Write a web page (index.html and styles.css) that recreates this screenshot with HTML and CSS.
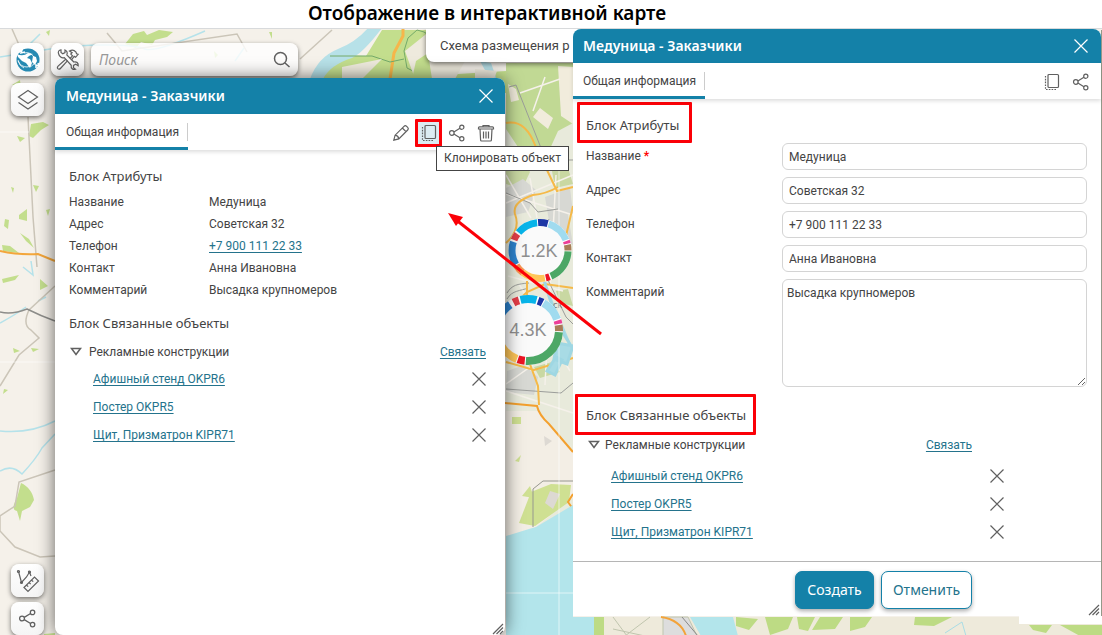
FILE: index.html
```html
<!DOCTYPE html>
<html lang="ru">
<head>
<meta charset="utf-8">
<meta name="viewport" content="width=device-width, initial-scale=1">
<title>Отображение в интерактивной карте</title>
<link rel="stylesheet" href="styles.css">
</head>
<body>
<svg class="sprite" aria-hidden="true">
  <symbol id="close" viewBox="0 0 16 16"><path d="M1.5 1.5l13 13M14.5 1.5l-13 13"/></symbol>
  <symbol id="share" viewBox="0 0 18 18"><circle cx="3.8" cy="9" r="2.3"/><circle cx="13.8" cy="3.2" r="2.1"/><circle cx="13.8" cy="14.8" r="2.1"/><path d="M5.9 7.9l6-3.6M5.9 10.1l6 3.6"/></symbol>
  <symbol id="clone" viewBox="0 0 18 18"><rect x="5" y="1.5" width="10.5" height="13" rx="1"/><path d="M2.5 3v13.5H13" stroke-dasharray="1.6 1.2"/></symbol>
  <symbol id="pencil" viewBox="0 0 18 18"><path d="M1.8 16.2l1.3-5L12 2.3c.8-.8 1.8-.8 2.6 0l1.1 1.1c.8.8.8 1.800 0 2.600l-8.900 8.900zM3.100 11.200c1.800.2 3.400 1.800 3.700 3.700M10.300 4l3.700 3.700"/></symbol>
  <symbol id="trash" viewBox="0 0 18 18"><path d="M1.500 5V3.800c0-.6.4-.9 1-.9h13c.6 0 1 .3 1 .9V5zM6 2.800V1.500h6v1.300M3 5l.6 11c0 .6.4 1 1 1h8.800c.6 0 1-.4 1-1L15 5M6.500 7.500v7M9 7.500v7M11.500 7.500v7"/></symbol>
  <symbol id="caret" viewBox="0 0 12 10"><path d="M1.500 1.500h9L6 7.500z"/></symbol>
  <symbol id="grip" viewBox="0 0 12 12"><path d="M1 11L11 1M4.500 11L11 4.500M8 11l3-3"/></symbol>
  <symbol id="layers" viewBox="0 0 24 24"><path d="M12 2.500L21.500 9 12 15.500 2.500 9zM2.500 14.500L12 21l9.500-6.500"/></symbol>
  <symbol id="search-icon" viewBox="0 0 18 18"><circle cx="7.500" cy="7.500" r="6"/><path d="M12 12l4.500 4"/></symbol>
  <symbol id="tools" viewBox="0 0 24 24"><path d="M2.500 5.500C1.800 3.500 3 2 5 1.800L5 4.500l1.800 1.300L9 4.600V2c2 .8 2.800 3 1.800 5l7 7c2.700-.8 4.700 1 4.400 3.800l-2.500-1.600-2.200 1.200v2.300l2 1.600c-2.500.8-4.800-1-4.300-4L8.300 9.600c-2.600.9-5-.9-5.800-4.100z"/><path d="M11.600 12.600L4.400 20.500c-.8.9-2 .8-2.600.1-.6-.8-.5-1.700.3-2.500L10 11M14 10.500l2.500-2.700-1.700-1.700 1.300-1.400L13.500 3c2.400-1.500 4.700-1 6.300.8l.8 2 1.500.5-2.500 3-1.400-.9-2.700 3.500"/></symbol>
  <symbol id="ruler" viewBox="0 0 24 24"><path d="M2.500 2.500l3 11 5-5.500 3-5 1.500 4"/><circle cx="2.500" cy="2.500" r="1"/><circle cx="5.500" cy="13.500" r="1"/><circle cx="13.500" cy="3" r="1"/><path d="M8 18.500L18.500 8l4 4L12 22.500zM10.500 16l1.700 1.700M13 13.500l1.700 1.700M15.500 11l1.700 1.700"/></symbol>
</svg>

<h1 class="title">Отображение в интерактивной карте</h1>

<main class="stage">
  <svg class="map" viewBox="0 28 1102 607" preserveAspectRatio="xMinYMin slice" aria-hidden="true">
    <rect y="28" width="1102" height="607" fill="#f5f1ea"/>
    <g fill="#c3de8d">
      <path d="M312 78l24-24 30 1 16-26h50l10 45 131-8v130l-60 15V92H312z"/>
      <path d="M125 43l8-10 11-3 3 4 12-5 14 2-6 5-12 3-3 5-11-3-5 6zM46 31l4-2-1 6zM269 31h3v7zM214 50l4 4-3 3z"/>
      <path d="M31 123l12-2 6 3-8 5-8 8-4-2zM17 135l8 2-5 4zM12 84l8-5 1 8zM19 214l8-6v12l-8-2zM5 218l4 1-1 9-4-3zM11 186l3 1-1 5zM33 184l6 1-3 6zM2 244l8 1 9 7-16-2zM20 232l9 6 5 9-8-7zM40 278l8 7-8 4zM2 278l17-4-4 5-12 3zM13 347l7 3-6 2zM31 347l8 1-6 3zM4 388l4 1-5 4zM46 209l4-1-2 7z"/>
      <path d="M21 482c7 3 12 10 13 17l-4 7-8 4-2 10-3-10c-6-1-3-8 0-13zM44 633l11-1v3H44z"/>
    </g>
    <g fill="none" stroke="#b5e2ea" stroke-width="1.500">
      <path d="M0 56q25-4 50-8t55-4 40 4 60-18"/><path d="M0 430q30 3 55-10M0 470q12-7 22 3Q36 458 42 447l13-14M15 68l15-25 10-10M0 322q15-8 26-16"/>
      <path d="M235 60l9-13M23 266l10 8-2-14M38 300l8-4"/>
    </g>
    <path d="M310 78q8-22 28-30 18-7 30-21h14q-19 25-30 30-22 7-29 21zM480 60l11 2 7 20-7-2z" fill="#b7e1e8"/>
    <g fill="none" stroke="#cbc5b8" stroke-width="1.500">
      <path d="M28 116l5 100 4 50M55 285L29 309q-7 15 2 20l8 8-20 17-19 31M55 469l-36 12-4 24-15 10v15l15 16 25 10 15-1M12 28l15 34M107 32l15 18 115-17 10 18M122 50l-15-18M300 58l32-29"/>
    </g>
    <path d="M0 250q18 4 38 3l17 7" stroke="#f3a63b" stroke-width="2" fill="none"/>
    <path d="M0 311q12 3 27-3 14 7 28 12" stroke="#8d8d8a" stroke-width="1.500" fill="none"/>
    <path d="M403 28v7l-9 17-4 26" stroke="#f6b64a" stroke-width="3" fill="none"/>
    <path d="M432 36l-8-5-7-2-9 8-4 13 3 17 12 6M330 55l42 0 18 6 14-3" stroke="#74aa69" stroke-width="1" fill="none"/>
    <path d="M342 66l40-8-20 20h-20zM405 50l25-20 50 3-25 45h-40zM475 68l22 2-3 8h-19z" fill="#eeeadd"/>
    <path d="M416 60l12-8 4 26h-20z" fill="#c3de8d"/>

    <path d="M506 70h67v480h-67z" fill="#e8eadb"/>
    <path d="M506 62h67v60l-15 8-14 31-18-3-20-30z" fill="#c1d994"/>
    <path d="M558 65l15 1v57l-12-8zM508 83l8 5 3 11-8 2zM540 107l13 10-5 11-15-12z" fill="#f1ecdc"/>
    <g fill="#c9d8a2"><path d="M506 157h15l9 14-8 17-16-5zM552 170l16-3 5 16-18 4zM534 366l18-5 8 10-20 6zM512 342l9 2-4 9-11-2zM556 290l12-2 5 17-13-3z"/></g>
    <g fill="#d7d8d3"><path d="M506 187l17-9 13 11-8 22-22 5zM545 196l25-9 3 25-24 8zM507 370l17-6 14 12-4 18-28-3zM548 213l20 1 5 30-16-9z"/></g>
    <g stroke="#f5f1ea" stroke-width="1.500" fill="none"><path d="M506 193l67 21M506 202l67-28M506 390l67 22M506 383l48-34M530 177l7 40M519 283l51 87M508 275l55 15M556 174l-11 210M506 174l25 43M520 92l40-14M545 76l-12 34"/></g>
    <g stroke="#9b9d9a" stroke-width="1" fill="none"><path d="M509 86l7-2 25 63 26 12h6M506 192l24 10 8 9 20-3M506 388l55 4 12-10M507 292c5-8 10-9 22-10M507 298c5-9 14-8 21-11M549 218l-15 35M546 275l20 41 7 7"/></g>
    <g stroke="#f5b948" stroke-width="2" fill="none"><path d="M506 122q19-4 29 22l22 46 16-4M506 242q15-13 9-29-3-12 18-19 13-1 25-8M507 310l20-19 18-8 28 4M527 280v75l11 30 1 19M506 361l28 8 39-12M573 205l-8 34"/></g>
    <path d="M544 279l14 45 15 24M557 342l16 3-6 18-13-5zM547 370l9-14 6 3-7 15z" stroke="#9fd7e3" stroke-width="3" fill="#a8dbe5"/>
    <text x="553" y="307" font-family="Noto Sans" font-size="9" fill="#777">ск</text>
    <path d="M506 410h33l34 40v47l-16 12-23 19-28 8z" fill="#f3eee5"/>
    <path d="M512 416h9v7h-9zM515 460l6-6-2 7zM531 491l20-8 20 1-2 17-34 24-16-3zM522 495l8-10 4 12z" fill="#cfe092"/>
    <path d="M544 435l8 5-7 5zM550 490l10 3-7 15-8-6z" fill="#ddd9d3"/>
    <path d="M533 526v-38l10-8h30" fill="none" stroke="#96978f" stroke-width="1"/>
    <path d="M505 402l32 3q2 9 12 18l24 28M573 493l-5 8 5 7" stroke="#f3a02e" stroke-width="2" fill="none"/>
    <path d="M506 535l23-7 7-2 37-22v131h-67z" fill="#b3e5eb"/>
    <path d="M559 160v475M506 592h68M0 361h55M0 131h29" stroke="#fff" stroke-opacity=".6" fill="none"/>

    <path d="M573 616h529v19H573z" fill="#eeeadb"/>
    <path d="M573 616h21v19h-21zM690 616h43l5 19h-37z" fill="#b3e5eb"/>
    <path d="M594 616h10v19h-10zM736 616l22 2-9 11-13-4zM765 616h28l-5 12-18 6zM797 616h18l-7 14-9-2zM820 616h23l-8 12-23 1zM850 616h22l-7 10-15 4zM915 616h37l-18 9-20-1zM1029 624h23l-6 8-13-3zM1060 624h42v11h-22z" fill="#bddb84"/>
    <path d="M613 616l14 19M650 616l-25 19M613 628l32 7M663 616h25l9 19h-34z" fill="#ddd" stroke="#c0c5ae"/>
    <path d="M661 616q20 3 25 19" fill="none" stroke="#f3a33a" stroke-width="2"/>
    <path d="M682 616l16 19" fill="none" stroke="#888"/><path d="M945 632l17-11 4 14" fill="none" stroke="#a9dce5"/>
    <path d="M1102 29v587h-1V29z" fill="#93998a"/>

    <circle cx="540" cy="249.500" r="31" fill="#fafafa"/>
    <g transform="rotate(-90 540 249.500)" fill="none" stroke-width="7">
      <circle cx="540" cy="249.500" r="28" stroke="#fff"/>
      <circle pathLength="360" cx="540" cy="249.500" r="28" stroke="#1c37a6" stroke-dasharray="20 340" stroke-dashoffset="4"/>
      <circle pathLength="360" cx="540" cy="249.500" r="28" stroke="#a0dbef" stroke-dasharray="50 310" stroke-dashoffset="-18"/>
      <circle pathLength="360" cx="540" cy="249.500" r="28" stroke="#ec3f98" stroke-dasharray="6 354" stroke-dashoffset="-70"/>
      <circle pathLength="360" cx="540" cy="249.500" r="28" stroke="#a87d57" stroke-dasharray="12 348" stroke-dashoffset="-78"/>
      <circle pathLength="360" cx="540" cy="249.500" r="28" stroke="#4da766" stroke-dasharray="65 295" stroke-dashoffset="-92"/>
      <circle pathLength="360" cx="540" cy="249.500" r="28" stroke="#ec1424" stroke-dasharray="8 352" stroke-dashoffset="-160"/>
      <circle pathLength="360" cx="540" cy="249.500" r="28" stroke="#ffc658" stroke-dasharray="48 312" stroke-dashoffset="-170"/>
      <circle pathLength="360" cx="540" cy="249.500" r="28" stroke="#f79552" stroke-dasharray="20 340" stroke-dashoffset="-218"/>
      <circle pathLength="360" cx="540" cy="249.500" r="28" stroke="#2d83cf" stroke-dasharray="48 312" stroke-dashoffset="-240"/>
      <circle pathLength="360" cx="540" cy="249.500" r="28" stroke="#e33e48" stroke-dasharray="14 346" stroke-dashoffset="-292"/>
      <circle pathLength="360" cx="540" cy="249.500" r="28" stroke="#07b4e9" stroke-dasharray="44 316" stroke-dashoffset="-310"/>
    </g>
    <circle cx="528" cy="329" r="34" fill="#fafafa"/>
    <g transform="rotate(-90 528 329)" fill="none" stroke-width="8">
      <circle cx="528" cy="329" r="31" stroke="#fff"/>
      <circle pathLength="360" cx="528" cy="329" r="31" stroke="#1c37a6" stroke-dasharray="9 351" stroke-dashoffset="-19"/>
      <circle pathLength="360" cx="528" cy="329" r="31" stroke="#a0dbef" stroke-dasharray="40 320" stroke-dashoffset="-30"/>
      <circle pathLength="360" cx="528" cy="329" r="31" stroke="#ec3f98" stroke-dasharray="7 353" stroke-dashoffset="-72"/>
      <circle pathLength="360" cx="528" cy="329" r="31" stroke="#a87d57" stroke-dasharray="11 349" stroke-dashoffset="-81"/>
      <circle pathLength="360" cx="528" cy="329" r="31" stroke="#4da766" stroke-dasharray="90 270" stroke-dashoffset="-94"/>
      <circle pathLength="360" cx="528" cy="329" r="31" stroke="#ec1424" stroke-dasharray="13 347" stroke-dashoffset="-186"/>
      <circle pathLength="360" cx="528" cy="329" r="31" stroke="#ffc658" stroke-dasharray="60 300" stroke-dashoffset="-201"/>
      <circle pathLength="360" cx="528" cy="329" r="31" stroke="#2d83cf" stroke-dasharray="60 300" stroke-dashoffset="-265"/>
      <circle pathLength="360" cx="528" cy="329" r="31" stroke="#e33e48" stroke-dasharray="11 349" stroke-dashoffset="-332"/>
      <circle pathLength="360" cx="528" cy="329" r="31" stroke="#07b4e9" stroke-dasharray="30 330" stroke-dashoffset="-346"/>
    </g>
    <g class="count"><text x="539" y="256">1.2K</text><text x="528" y="335">4.3K</text></g>
  </svg>

  <div class="tools">
    <button class="tool" aria-label="Карта"><svg viewBox="0 0 24 24"><circle cx="12" cy="12" r="11.500" fill="#268ab2"/><path d="M1 6q6 3 11-1l5 1-4 2-2 2 3 1 2 4-2 5-4-5-4-2-4-4zM17 8l3 1 1 4-2 4-3-3z" fill="#fff"/><path d="M2 5l4-3-1 3 4-1M22 15l1 3-3-1v3" fill="none" stroke="#fff" stroke-width="1.500"/><path d="M2 13q3 6 9 6 5 0 8-4M8 5q7-2 11 6M8 20q-5-2-6-8" fill="none" stroke="#fff" stroke-width=".8"/></svg></button>
    <button class="tool" aria-label="Инструменты"><svg class="icon"><use href="#tools"/></svg></button>
    <label class="search"><input type="text" placeholder="Поиск" aria-label="Поиск"><svg class="icon"><use href="#search-icon"/></svg></label>
    <button class="tool" aria-label="Слои"><svg class="icon"><use href="#layers"/></svg></button>
  </div>
  <div class="tools-bottom">
    <button class="tool" aria-label="Измерения"><svg class="icon"><use href="#ruler"/></svg></button>
    <button class="tool" aria-label="Поделиться картой"><svg class="icon"><use href="#share"/></svg></button>
  </div>
  <button class="scheme">Схема размещения р</button>
  <span class="notch"></span>

  <section class="window view">
    <header class="bar"><h2>Медуница - Заказчики</h2><button aria-label="Закрыть"><svg class="icon"><use href="#close"/></svg></button></header>
    <nav class="tabs">
      <button class="tab">Общая информация</button>
      <div class="actions">
        <button aria-label="Редактировать"><svg class="icon"><use href="#pencil"/></svg></button>
        <button class="clone" aria-label="Клонировать"><svg class="icon"><use href="#clone"/></svg></button>
        <button aria-label="Поделиться"><svg class="icon"><use href="#share"/></svg></button>
        <button aria-label="Удалить"><svg class="icon"><use href="#trash"/></svg></button>
      </div>
      <span class="tooltip" role="tooltip">Клонировать объект</span>
    </nav>
    <div class="content">
      <h3>Блок Атрибуты</h3>
      <dl>
        <dt>Название</dt><dd>Медуница</dd>
        <dt>Адрес</dt><dd>Советская 32</dd>
        <dt>Телефон</dt><dd><a href="tel:+79001112233">+7 900 111 22 33</a></dd>
        <dt>Контакт</dt><dd>Анна Ивановна</dd>
        <dt>Комментарий</dt><dd>Высадка крупномеров</dd>
      </dl>
      <h3>Блок Связанные объекты</h3>
      <div class="group"><button class="caret" aria-label="Свернуть"><svg class="icon"><use href="#caret"/></svg></button><span>Рекламные конструкции</span><a href="#">Связать</a></div>
      <ul class="linked">
        <li><a href="#">Афишный стенд OKPR6</a><button aria-label="Удалить связь"><svg class="icon"><use href="#close"/></svg></button></li>
        <li><a href="#">Постер OKPR5</a><button aria-label="Удалить связь"><svg class="icon"><use href="#close"/></svg></button></li>
        <li><a href="#">Щит, Призматрон KIPR71</a><button aria-label="Удалить связь"><svg class="icon"><use href="#close"/></svg></button></li>
      </ul>
    </div>
    <svg class="icon grip"><use href="#grip"/></svg>
  </section>

  <form class="window edit">
    <header class="bar"><h2>Медуница - Заказчики</h2><button type="button" aria-label="Закрыть"><svg class="icon"><use href="#close"/></svg></button></header>
    <nav class="tabs">
      <button type="button" class="tab">Общая информация</button>
      <div class="actions">
        <button type="button" aria-label="Клонировать"><svg class="icon"><use href="#clone"/></svg></button>
        <button type="button" aria-label="Поделиться"><svg class="icon"><use href="#share"/></svg></button>
      </div>
    </nav>
    <div class="content">
      <h3 class="marked">Блок Атрибуты</h3>
      <div class="fields">
        <label for="name">Название <b>*</b></label><input id="name" type="text" value="Медуница" required>
        <label for="address">Адрес</label><input id="address" type="text" value="Советская 32">
        <label for="phone">Телефон</label><input id="phone" type="tel" value="+7 900 111 22 33">
        <label for="contact">Контакт</label><input id="contact" type="text" value="Анна Ивановна">
        <label for="comment">Комментарий</label><textarea id="comment">Высадка крупномеров</textarea>
      </div>
      <h3 class="marked wide">Блок Связанные объекты</h3>
      <div class="group"><button type="button" class="caret" aria-label="Свернуть"><svg class="icon"><use href="#caret"/></svg></button><span>Рекламные конструкции</span><a href="#">Связать</a></div>
      <ul class="linked">
        <li><a href="#">Афишный стенд OKPR6</a><button type="button" aria-label="Удалить связь"><svg class="icon"><use href="#close"/></svg></button></li>
        <li><a href="#">Постер OKPR5</a><button type="button" aria-label="Удалить связь"><svg class="icon"><use href="#close"/></svg></button></li>
        <li><a href="#">Щит, Призматрон KIPR71</a><button type="button" aria-label="Удалить связь"><svg class="icon"><use href="#close"/></svg></button></li>
      </ul>
    </div>
    <footer class="footer"><button class="primary">Создать</button><button type="button" class="secondary">Отменить</button></footer>
    <svg class="icon grip"><use href="#grip"/></svg>
  </form>

  <svg class="arrow" viewBox="0 0 156 124" aria-hidden="true"><path d="M154 122L8 7" stroke="#fb0007" stroke-width="3"/><path d="M1 1l15 4-7 9z" fill="#fb0007"/></svg>
</main>
</body>
</html>
```
FILE: styles.css
```css
* { box-sizing: border-box; }

body {
  margin: 0;
  height: 100vh;
  display: flex;
  flex-direction: column;
  overflow: hidden;
  background: #fff;
  color: #444;
  font: 12px/20px Roboto, "Noto Sans", sans-serif;
}

button, input, textarea { font: inherit; color: inherit; }
button { border: 0; padding: 0; background: none; cursor: pointer; }
h1, h2, h3, dl, dd, ul { margin: 0; padding: 0; }
a { color: #24738c; text-underline-offset: 2px; }

.sprite { position: absolute; width: 0; height: 0; }
.icon { display: block; width: 18px; height: 18px; fill: none; stroke: #606060; stroke-width: 1.2px; }

.title {
  flex: none;
  padding: 0 128px 2px 0;
  text-align: center;
  color: #000;
  font-family: "Noto Sans", sans-serif;
  font-size: 19px;
  font-weight: 600;
  line-height: 26px;
}

.stage { position: relative; flex: 1; min-height: 0; overflow: hidden; border-top: 1px solid #d8dadc; }
.map { position: absolute; inset: 0; width: 100%; height: 100%; }
.count { fill: #8f8f8f; font: 18px "Liberation Sans", Arial, sans-serif; text-anchor: middle; }

.tools {
  position: absolute;
  left: 11px;
  top: 14px;
  width: 287px;
  display: grid;
  grid-template-columns: 33px 33px minmax(0, 1fr);
  gap: 7px;
}
.tools-bottom { position: absolute; left: 11px; bottom: 0; display: grid; gap: 5px; }
.tool {
  display: grid;
  place-items: center;
  width: 33px;
  height: 33px;
  border-radius: 8px;
  background: linear-gradient(#fff, #f5f5f5);
  box-shadow: 0 2px 5px #0008;
}
.tool svg { width: 24px; height: 24px; }
.tools-bottom .tool:last-child svg { width: 19px; height: 19px; }
.search {
  display: flex;
  align-items: center;
  padding: 0 7px 0 8px;
  border-radius: 8px;
  background: #fffc;
  box-shadow: 0 2px 5px #0008;
}
.search input { flex: 1; min-width: 0; border: 0; padding: 0; background: none; outline: 0; font-family: "Noto Sans", sans-serif; font-size: 14px; font-style: italic; }
.search input::placeholder { color: #999; }
.search .icon { stroke-width: 1.5px; }

.scheme {
  position: absolute;
  left: 426px;
  top: 0;
  height: 33px;
  padding: 0 14px;
  border-radius: 0 0 8px 8px;
  background: #fff;
  box-shadow: 0 2px 5px #0008;
  font-size: 13px;
  white-space: nowrap;
}
.notch { position: absolute; right: 0; bottom: 11px; width: 83px; height: 8px; background: #fff; }

.window { position: absolute; display: flex; flex-direction: column; background: #fff; border-radius: 8px 8px 0 0; }
.view { left: 55px; top: 49px; bottom: 0; width: 450px; border-radius: 8px; box-shadow: 0 0 18px #0009; }
.edit { left: 52%; right: 1px; top: 0; bottom: 19px; }

.bar {
  flex: none;
  display: flex;
  align-items: center;
  justify-content: space-between;
  height: 36px;
  padding: 0 11px;
  border-radius: 8px 8px 0 0;
  background: #1481a8;
  color: #fff;
}
.edit .bar { height: 34px; padding: 0 12px 0 10px; }
.bar h2 { font-family: "Noto Sans", sans-serif; font-size: 14px; font-weight: 600; }
.bar .icon { width: 16px; height: 16px; stroke: #fff; }

.tabs {
  position: relative;
  flex: none;
  display: flex;
  justify-content: space-between;
  height: 36px;
  box-shadow: 0 2px 4px #0002;
}
.tab {
  position: relative;
  width: 133px;
  padding: 3px 0 0 11px;
  text-align: left;
  border-bottom: 3px solid #1481a8;
  white-space: nowrap;
}
.edit .tab { width: 132px; padding-left: 10px; }
.tab::after { content: ""; position: absolute; right: 0; top: 9px; height: 18px; border-right: 1px solid #ccc; }
.actions { display: flex; align-items: center; padding: 2px 5px 0 0; }
.actions button { display: grid; place-items: center; width: 29px; height: 28px; }
.edit .actions { padding-right: 6px; }
.actions .clone { width: 27px; border: 3px solid #fb0007; border-radius: 1px; background: #dcecf2; }
.tooltip {
  position: absolute;
  z-index: 2;
  left: 381px;
  top: 32px;
  height: 25px;
  padding: 0 7px;
  border: 1px solid #444;
  background: #fff;
  color: #444;
  line-height: 23px;
  white-space: nowrap;
}

.content { flex: 1; min-height: 0; }
.view .content { padding: 16px 14px 0; }
h3 { font-family: "Noto Sans", sans-serif; font-size: 13px; font-weight: 400; line-height: 20px; }
dl { display: grid; grid-template-columns: 140px 1fr; line-height: 22px; margin: 5px 0 12px; }

.group { display: flex; align-items: center; height: 28px; }
.group a { margin-left: auto; }
.caret { width: 12px; margin-right: 7px; }
.caret .icon { width: 12px; height: 10px; stroke-width: 1.5px; }
.linked { list-style: none; }
.linked li { display: flex; align-items: center; justify-content: space-between; height: 28px; }
.linked .icon { width: 16px; height: 16px; }

.view .group { height: 26px; margin-top: 6px; padding: 0 5px 0 1px; }
.view .linked { padding: 0 4px 0 24px; }

.edit .content { padding: 3px 14px 0 13px; }
.marked {
  width: 115px;
  height: 41px;
  margin-left: -9px;
  padding: 5px 0 0 6px;
  line-height: 30px;
  border: 3px solid #fb0007;
  border-radius: 1px;
  white-space: nowrap;
}
.marked.wide { width: 181px; margin: 7px 0 0 -11px; padding: 3px 0 0 8px; }
.fields { display: grid; grid-template-columns: 196px 1fr; gap: 7px 0; }
.fields label { line-height: 27px; }
.fields b { color: #f00; }
.fields input, .fields textarea {
  width: 100%;
  height: 27px;
  margin: 0;
  padding: 0 6px;
  border: 1px solid #d4d4d4;
  border-radius: 6px;
  background: #fff;
}
.fields textarea { display: block; height: 108px; padding: 3px 4px; resize: both; }
.edit .group { height: 19px; padding: 0 115px 0 2px; }
.edit .group .caret { margin-right: 5px; }
.edit .linked { padding: 8px 82px 0 25px; }

.footer {
  flex: none;
  display: flex;
  justify-content: flex-end;
  gap: 7px;
  height: 55px;
  padding: 9px 129px 7px;
  border-top: 1px solid #b5b5b5;
}
.footer button { height: 38px; border-radius: 7px; border: 1px solid #1481a8; box-shadow: 0 2px 4px #0005; font-family: "Noto Sans", sans-serif; font-size: 14px; }
.footer .primary { width: 79px; background: #1481a8; color: #fff; }
.footer .secondary { width: 91px; background: #fff; color: #24738c; }
.grip { position: absolute; right: 1px; bottom: 0; width: 12px; height: 12px; }

.arrow { position: absolute; z-index: 3; left: 447px; top: 183px; width: 156px; height: 124px; }
```
